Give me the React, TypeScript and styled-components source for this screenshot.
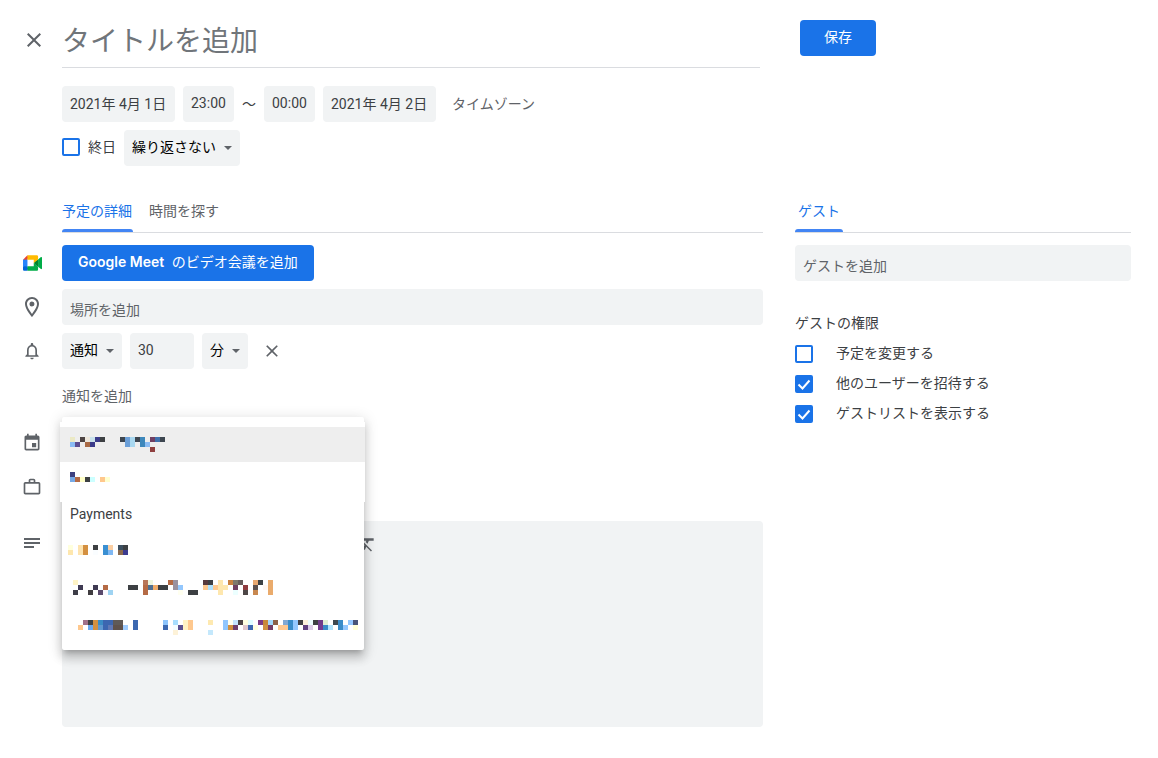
import React from "react";
import styled, { createGlobalStyle } from "styled-components";

const color = {
  text: "#3c4043",
  muted: "#5f6368",
  hint: "#70757a",
  field: "#f1f3f4",
  line: "#dadce0",
  blue: "#1a73e8",
};

const GlobalStyle = createGlobalStyle`
  *, *::before, *::after { box-sizing: border-box; }
  body {
    margin: 0;
    background: #fff;
    color: ${color.text};
    font: 400 14px/20px Roboto, "Noto Sans CJK JP", sans-serif;
  }
  button, input, select, textarea { font: inherit; color: inherit; margin: 0; }
  svg { display: block; flex: none; }
`;

const Page = styled.main`
  padding: 20px 27px 31px 0;
`;

const Header = styled.header`
  display: flex;
  align-items: flex-start;
  height: 48px;
`;

const IconButton = styled.button`
  display: flex;
  align-items: center;
  justify-content: center;
  width: 24px;
  height: 24px;
  padding: 0;
  border: 0;
  background: none;
  color: ${color.muted};
  cursor: pointer;
`;

const CloseCell = styled.div`
  display: flex;
  flex: none;
  align-items: center;
  width: 62px;
  height: 40px;
  padding-left: 22px;
`;

const TitleInput = styled.input`
  flex: 1;
  min-width: 0;
  height: 48px;
  padding: 0 0 4px;
  border: 0;
  border-bottom: 1px solid ${color.line};
  outline: 0;
  font-size: 28px;
  line-height: 40px;

  &::placeholder { color: ${color.hint}; opacity: 1; }
`;

const HeaderActions = styled.div`
  flex: none;
  width: 331px;
  margin-left: 40px;
`;

const PrimaryButton = styled.button`
  height: 36px;
  padding: 0 16px 2px;
  border: 0;
  border-radius: 4px;
  background: ${color.blue};
  color: #fff;
  white-space: nowrap;
  cursor: pointer;
`;

const SaveButton = styled(PrimaryButton)`
  padding: 0 24px 2px;
`;

const Brand = styled.span`
  margin-right: 4px;
  font-family: Inter, sans-serif;
  font-weight: 600;
`;

const Schedule = styled.section`
  display: flex;
  flex-direction: column;
  gap: 8px;
  padding: 18px 0 0 62px;
`;

const Line = styled.div`
  display: flex;
  align-items: center;
  gap: 8px;
  min-height: 36px;
`;

const Field = styled.input<{ $width?: number; $low?: boolean }>`
  width: ${(p) => (p.$width ? `${p.$width}px` : "100%")};
  height: 36px;
  padding: ${(p) => (p.$low ? "6px 8px 0" : "0 8px 2px")};
  border: 0;
  border-radius: 4px;
  outline: 0;
  background: ${color.field};

  &::placeholder { color: ${color.muted}; opacity: 1; }
`;

const Tilde = styled.span`
  width: 14px;
  text-align: center;
`;

const TextButton = styled.button`
  height: 36px;
  padding: 0;
  border: 0;
  background: none;
  color: ${color.muted};
  cursor: pointer;
`;

const ZoneButton = styled(TextButton)`
  margin-left: 8px;
`;

const AddReminder = styled(TextButton)`
  padding-top: 2px;
`;

const CheckLabel = styled.label<{ $gap: number }>`
  display: flex;
  align-items: center;
  gap: ${(p) => p.$gap}px;
  height: 30px;
  cursor: pointer;

  & > span:last-child { padding-bottom: 2px; }

  ${Line} & {
    align-self: flex-start;
    height: 34px;
  }

  ${Line} & > span:last-child { padding-bottom: 0; }
`;

const CheckFrame = styled.span`
  position: relative;
  width: 18px;
  height: 18px;

  svg {
    position: absolute;
    inset: 0;
    pointer-events: none;
  }
`;

const CheckInput = styled.input`
  display: block;
  width: 18px;
  height: 18px;
  appearance: none;
  border: 2px solid ${color.blue};
  border-radius: 2px;
  background: #fff;

  &:checked { background: ${color.blue}; }
  &:not(:checked) + svg { display: none; }
`;

const SelectFrame = styled.span<{ $width: number }>`
  position: relative;
  width: ${(p) => p.$width}px;

  svg {
    position: absolute;
    top: 16px;
    right: 8px;
    pointer-events: none;
  }
`;

const SelectInput = styled.select`
  width: 100%;
  height: 36px;
  padding: 0 20px 2px 8px;
  appearance: none;
  border: 0;
  border-radius: 4px;
  outline: 0;
  background: ${color.field};
  color: #000;
`;

const Columns = styled.div`
  display: flex;
  align-items: flex-start;
  gap: 32px;
  padding-top: 24px;
`;

const Details = styled.section`
  flex: 1;
  min-width: 0;
`;

const Guests = styled.section`
  flex: none;
  width: 336px;
`;

const Tabs = styled.div<{ $indent?: number }>`
  display: flex;
  gap: 16px;
  height: 43px;
  margin: 0 0 12px ${(p) => p.$indent ?? 0}px;
  border-bottom: 1px solid ${color.line};
`;

const Tab = styled.button<{ $active?: boolean; $wide?: boolean }>`
  position: relative;
  height: 42px;
  padding: ${(p) => (p.$wide ? "0 3px" : "0 1px 0 0")};
  border: 0;
  background: none;
  color: ${(p) => (p.$active ? color.blue : color.muted)};
  cursor: pointer;

  &::after {
    content: "";
    display: ${(p) => (p.$active ? "block" : "none")};
    position: absolute;
    inset: auto 0 0;
    height: 3px;
    border-radius: 3px 3px 0 0;
    background: #4285f4;
  }
`;

const Rows = styled.div`
  display: flex;
  flex-direction: column;
  gap: 8px;
`;

const Row = styled.div<{ $spaced?: number }>`
  display: flex;
  align-items: flex-start;
  margin-top: ${(p) => p.$spaced ?? 0}px;
`;

const RowIcon = styled.div<{ $tall?: boolean }>`
  display: flex;
  flex: none;
  align-items: center;
  justify-content: center;
  width: 24px;
  height: ${(p) => (p.$tall ? 44 : 36)}px;
  margin: 0 18px 0 20px;
  color: ${color.muted};
`;

const RowBody = styled.div`
  position: relative;
  flex: 1;
  min-width: 0;
  min-height: 36px;
`;

const RemoveButton = styled(IconButton)`
  margin-left: 4px;
`;

const Menu = styled.div`
  position: absolute;
  z-index: 2;
  top: -8px;
  left: 0;
  width: 302px;
  padding: 5px 0 7px;
  border-radius: 2px;
  background: #fff;
  box-shadow:
    0 8px 10px 1px rgba(0, 0, 0, 0.14),
    0 3px 14px 2px rgba(0, 0, 0, 0.12),
    0 5px 5px -3px rgba(0, 0, 0, 0.2);
`;

const MenuHead = styled.div`
  margin: 0 -1px -5px -2px;
  padding: 5px 0;
  background: #fff;
`;

const Option = styled.button<{ $height?: number; $selected?: boolean }>`
  display: flex;
  align-items: center;
  width: 100%;
  height: ${(p) => p.$height ?? 35}px;
  padding: 0 6px;
  border: 0;
  background: ${(p) => (p.$selected ? "#eee" : "transparent")};
  text-align: left;
  cursor: pointer;
`;

const OptionText = styled.span`
  padding: 0 2px 2px;
`;

const Description = styled.div`
  border-radius: 4px;
  background: ${color.field};
`;

const Toolbar = styled.div`
  display: flex;
  align-items: center;
  justify-content: flex-end;
  width: 317px;
  height: 46px;
`;

const DescriptionInput = styled.textarea`
  display: block;
  width: 100%;
  height: 160px;
  padding: 8px;
  border: 0;
  outline: 0;
  resize: none;
  background: transparent;
`;

const GroupTitle = styled.h2`
  margin: 32px 0 6px;
  font-size: 14px;
  line-height: 20px;
  font-weight: 400;
`;

const paths = {
  close:
    "M19 6.41L17.59 5 12 10.59 6.41 5 5 6.41 10.59 12 5 17.59 6.41 19 12 13.41 17.59 19 19 17.59 13.41 12z",
  place:
    "M12 2C8.13 2 5 5.13 5 9c0 5.25 7 13 7 13s7-7.75 7-13c0-3.87-3.13-7-7-7zM7 9c0-2.76 2.24-5 5-5s5 2.24 5 5c0 2.88-2.88 7.19-5 9.88C9.92 16.21 7 11.85 7 9zM12 6.5a2.5 2.5 0 100 5 2.5 2.5 0 000-5z",
  bell:
    "M12 22c1.1 0 2-.9 2-2h-4c0 1.1.9 2 2 2zm6-6v-5c0-3.07-1.63-5.64-4.5-6.32V4c0-.83-.67-1.5-1.5-1.5s-1.5.67-1.5 1.5v.68C7.64 5.36 6 7.92 6 11v5l-2 2v1h16v-1l-2-2zm-2 1H8v-6c0-2.48 1.51-4.5 4-4.5s4 2.02 4 4.5v6z",
  event:
    "M17 12h-5v5h5v-5zM16 1v2H8V1H6v2H5c-1.11 0-1.99.9-1.99 2L3 19c0 1.1.89 2 2 2h14c1.1 0 2-.9 2-2V5c0-1.1-.9-2-2-2h-1V1h-2zm3 18H5V8h14v11z",
  work:
    "M14 6V4h-4v2h4zM4 8v11h16V8H4zm16-2c1.11 0 2 .89 2 2v11c0 1.11-.89 2-2 2H4c-1.11 0-2-.89-2-2l.01-11c0-1.11.88-2 1.99-2h4V4c0-1.11.89-2 2-2h4c1.11 0 2 .89 2 2v2h4z",
  notes: "M4 7h16v2H4zM4 11h16v2H4zM4 15h10v2H4z",
  clear:
    "M3.27 5L2 6.27l6.97 6.97L6.5 19h3l1.57-3.66L16.73 21 18 19.73 3.55 5.27 3.27 5zM6 5v.18L8.82 8h2.4l-.72 1.68 2.1 2.1L14.21 8H20V5H6z",
};

function Icon({ name, size = 20 }: { name: keyof typeof paths; size?: number }) {
  return (
    <svg width={size} height={size} viewBox="0 0 24 24" fill="currentColor" aria-hidden="true">
      <path d={paths[name]} />
    </svg>
  );
}

function MeetLogo() {
  return (
    <svg width="19" height="16" viewBox="0 0 87.5 72" aria-hidden="true">
      <path fill="#00832d" d="M49.5 36l8.53 9.75 11.47 7.33 2-17.02-2-16.64-11.69 6.44z" />
      <path fill="#0066da" d="M0 51.5V66c0 3.315 2.685 6 6 6h14.5l3-10.96-3-9.54-9.95-3z" />
      <path fill="#e94235" d="M20.5 0L0 20.5l10.55 3 9.95-3 2.95-9.41z" />
      <path fill="#2684fc" d="M20.5 20.5H0v31h20.5z" />
      <path
        fill="#00ac47"
        d="M82.6 8.68L69.5 19.42v33.66l13.16 10.79c1.97 1.54 4.85.135 4.85-2.37V11c0-2.535-2.945-3.925-4.91-2.32zM49.5 36v15.5h-29V72h43c3.315 0 6-2.685 6-6V53.08z"
      />
      <path fill="#ffba00" d="M63.5 0h-43v20.5h29V36l20-16.57V6c0-3.315-2.685-6-6-6z" />
    </svg>
  );
}

/* Each line lists "column:colour" cells of a redacted calendar name. */
type Mosaic = { indent: number; lines: string[] };

const names: Record<"a" | "b" | "c" | "d" | "e", Mosaic> = {
  a: {
    indent: 4,
    lines: [
      "0:ebe9c5 2:4d4444 3:eee8dd 4:c9e2ec 5:3b3b8a 6:3d4043 10:3d4650 11:6b9fd8 12:a8d7ef 13:3d4650 14:3d87bb 16:6f3f63 17:3e70ad 18:3d4650",
      "0:8bbcf4 1:5b4d90 3:a96a45 4:3b3b8a 11:6b9fd8 12:a8d7ef 14:3d87bb 15:8bbcf4",
      "16:8f4040",
    ],
  },
  b: {
    indent: 4,
    lines: ["0:3d4080", "0:76a9e6 1:b46a45 2:ffffc8 3:3d4043 4:ccffff 6:ffc88c 7:ffffd0", ""],
  },
  c: {
    indent: 0,
    lines: [
      "0:ffffdd 2:fee4b0 3:d49040 5:3d4043 7:3a8fd2 8:fbcfa3 10:3d5060 11:3d4043",
      "0:fee7ae 2:fee4b0 3:d49040 5:fafdff 7:3a8fd2 8:80b8f3 10:8c6a4c 11:3c3c90",
    ],
  },
  d: {
    indent: 5,
    lines: [
      "0:fff4c6 14:b87658 15:eef6dd 19:b56b45 20:9a92a0 26:583a3c 27:3d4043 29:fee7ae 31:c88040 32:7d786d 33:665c5c 36:e8a870 37:3d4043 39:eaab6c",
      "1:3f3a52 4:3f3a52 6:b56b45 11:3d4043 12:3d4043 14:b56b45 15:4f6f90 16:f0ac68 17:3d4043 18:3d4043 20:9a92a0 21:93c7fd 26:fec88e 27:b0e2fe 28:fec88e 29:fee7ae 30:fee7ae 32:6f3f63 34:8f3b3f 36:5c504d 38:fff6f0 39:eaab6c",
      "0:3e3e48 3:403c40 5:5a4a6c 6:fbfaff 7:9fd3f2 14:b56b45 21:fffff0 23:3d4043 24:3d4043 29:fee7ae 32:ecffff 34:4d4747 36:c88850 39:eaab6c",
    ],
  },
  e: {
    indent: 10,
    lines: [
      "",
      "1:a07088 2:3d4043 3:d49040 4:3a8cc4 5:3c66b0 6:3c66b0 7:5f5a58 8:5f5a58 11:3c68b0 17:8cc4fc 19:a8defe 21:fff2c4 22:fec88e 26:fee9b0 29:90c6fe 30:fffff0 31:c4e4fc 32:4c4444 33:ffffe0 34:e0feff 36:7a3c84 37:c88838 38:a4d8fc 39:8c6048 41:80a8d4 42:3a8cc8 43:94c8fe 44:404044 45:fdf0dc 46:ecfcff 47:3d4043 48:6f3c8a 49:e0f0d4 51:3d4850 52:3a8cc8 54:94c8fe 55:485478",
      "0:fec88e 2:6aa8f0 3:d49040 4:6098d0 5:3c66b0 6:6078b4 7:5f524c 8:5f524c 9:a0ccfe 11:3c68b0 17:3c68b0 19:f4fdff 20:5a5090 21:fff2c4 22:fec88e 29:90c6fe 30:d09040 31:6f3f6c 33:e0c8cc 34:3c68b0 35:ffffe0 37:d09040 38:743c68 40:fec890 41:fec890 42:3a8cc8 43:94c8fe 45:604080 46:dccce8 48:743c90 49:3a8cc8 50:b0e4fe 52:3a8cc8 53:94c8fe 55:ffffd8",
      "19:fdf2d8 26:c4e8fc",
    ],
  },
};

function RedactedName({ name }: { name: keyof typeof names }) {
  const { indent, lines } = names[name];
  const cells = lines.flatMap((line, row) =>
    line
      .split(" ")
      .filter(Boolean)
      .map((cell) => {
        const [col, fill] = cell.split(":");
        return { x: indent + Number(col) * 5, y: row * 5, fill: `#${fill}` };
      })
  );
  const width = Math.max(...cells.map((c) => c.x)) + 5;
  return (
    <svg width={width} height={lines.length * 5} shapeRendering="crispEdges" aria-hidden="true">
      {cells.map((c) => (
        <rect key={`${c.x}-${c.y}`} x={c.x} y={c.y} width="5" height="5" fill={c.fill} />
      ))}
    </svg>
  );
}

function Check({ label, gap, checked }: { label: string; gap: number; checked?: boolean }) {
  return (
    <CheckLabel $gap={gap}>
      <CheckFrame>
        <CheckInput type="checkbox" defaultChecked={checked} />
        <svg width="18" height="18" viewBox="0 0 18 18" aria-hidden="true">
          <path d="M3.5 9.5l4 4 7-8" fill="none" stroke="#fff" strokeWidth="2" />
        </svg>
      </CheckFrame>
      <span>{label}</span>
    </CheckLabel>
  );
}

function Select({ label, width, options }: { label: string; width: number; options: string[] }) {
  return (
    <SelectFrame $width={width}>
      <SelectInput aria-label={label}>
        {options.map((o) => (
          <option key={o}>{o}</option>
        ))}
      </SelectInput>
      <svg width="8" height="4" viewBox="0 0 8 4" fill={color.muted} aria-hidden="true">
        <path d="M0 0h8L4 4z" />
      </svg>
    </SelectFrame>
  );
}

function FormRow({
  icon,
  spaced,
  tall,
  children,
}: {
  icon?: React.ReactNode;
  spaced?: number;
  tall?: boolean;
  children?: React.ReactNode;
}) {
  return (
    <Row $spaced={spaced}>
      <RowIcon $tall={tall}>{icon}</RowIcon>
      <RowBody>{children}</RowBody>
    </Row>
  );
}

export default function App() {
  return (
    <>
      <GlobalStyle />
      <Page>
        <Header>
          <CloseCell>
            <IconButton type="button" aria-label="閉じる">
              <Icon name="close" size={24} />
            </IconButton>
          </CloseCell>
          <TitleInput aria-label="タイトル" placeholder="タイトルを追加" />
          <HeaderActions>
            <SaveButton type="button">保存</SaveButton>
          </HeaderActions>
        </Header>

        <Schedule>
          <Line>
            <Field $width={113} aria-label="開始日" defaultValue="2021年 4月 1日" />
            <Field $width={51} aria-label="開始時間" defaultValue="23:00" />
            <Tilde>～</Tilde>
            <Field $width={51} aria-label="終了時間" defaultValue="00:00" />
            <Field $width={113} aria-label="終了日" defaultValue="2021年 4月 2日" />
            <ZoneButton type="button">タイムゾーン</ZoneButton>
          </Line>
          <Line>
            <Check label="終日" gap={8} />
            <Select label="繰り返し" width={116} options={["繰り返さない", "毎日"]} />
          </Line>
        </Schedule>

        <Columns>
          <Details>
            <Tabs $indent={62}>
              <Tab type="button" $active>
                予定の詳細
              </Tab>
              <Tab type="button">時間を探す</Tab>
            </Tabs>
            <Rows>
              <FormRow icon={<MeetLogo />}>
                <PrimaryButton type="button">
                  <Brand>Google Meet</Brand> のビデオ会議を追加
                </PrimaryButton>
              </FormRow>
              <FormRow icon={<Icon name="place" size={24} />}>
                <Field $low aria-label="場所" placeholder="場所を追加" />
              </FormRow>
              <FormRow icon={<Icon name="bell" />}>
                <Line>
                  <Select label="通知方法" width={60} options={["通知", "メール"]} />
                  <Field $width={64} aria-label="通知までの時間" defaultValue="30" />
                  <Select label="単位" width={46} options={["分", "時間"]} />
                  <RemoveButton type="button" aria-label="通知を削除">
                    <Icon name="close" />
                  </RemoveButton>
                </Line>
              </FormRow>
              <FormRow>
                <AddReminder type="button">通知を追加</AddReminder>
              </FormRow>
              <FormRow spaced={4} icon={<Icon name="event" />}>
                <Menu role="listbox" aria-label="カレンダー">
                  <MenuHead>
                    <Option type="button" role="option" aria-selected="true" $selected>
                      <RedactedName name="a" />
                    </Option>
                    <Option type="button" role="option" aria-selected="false">
                      <RedactedName name="b" />
                    </Option>
                  </MenuHead>
                  <Option type="button" role="option" aria-selected="false">
                    <OptionText>Payments</OptionText>
                  </Option>
                  <Option type="button" role="option" aria-selected="false" $height={36}>
                    <RedactedName name="c" />
                  </Option>
                  <Option type="button" role="option" aria-selected="false" $height={39}>
                    <RedactedName name="d" />
                  </Option>
                  <Option type="button" role="option" aria-selected="false" $height={36}>
                    <RedactedName name="e" />
                  </Option>
                </Menu>
              </FormRow>
              <FormRow icon={<Icon name="work" />} />
              <FormRow spaced={8} tall icon={<Icon name="notes" size={24} />}>
                <Description>
                  <Toolbar>
                    <IconButton type="button" aria-label="書式をクリア">
                      <Icon name="clear" />
                    </IconButton>
                  </Toolbar>
                  <DescriptionInput aria-label="説明" />
                </Description>
              </FormRow>
            </Rows>
          </Details>

          <Guests>
            <Tabs>
              <Tab type="button" $active $wide>
                ゲスト
              </Tab>
            </Tabs>
            <Field $low aria-label="ゲスト" placeholder="ゲストを追加" />
            <GroupTitle>ゲストの権限</GroupTitle>
            <Check label="予定を変更する" gap={23} />
            <Check label="他のユーザーを招待する" gap={23} checked />
            <Check label="ゲストリストを表示する" gap={23} checked />
          </Guests>
        </Columns>
      </Page>
    </>
  );
}
